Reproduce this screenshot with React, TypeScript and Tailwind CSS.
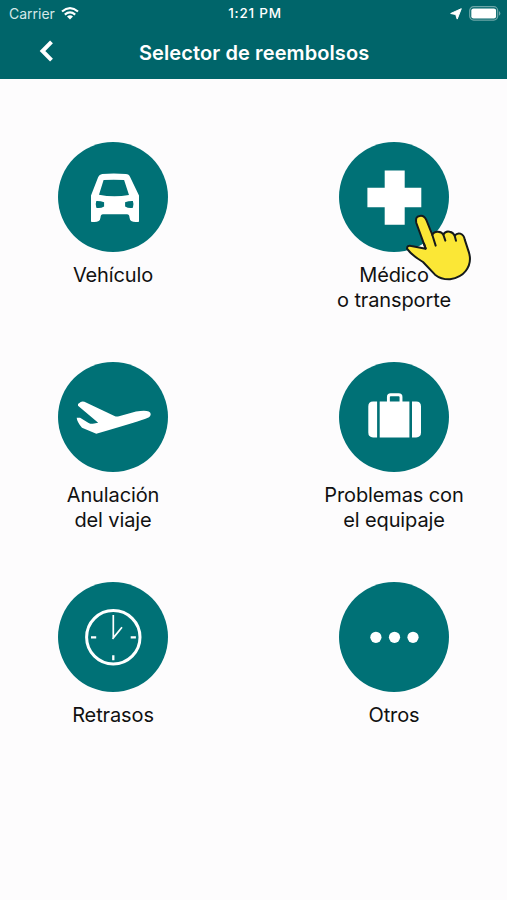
import type { ReactNode } from 'react';

function CarIcon() {
  return (
    <svg viewBox="0 -0.500 110 110" className="size-full" fill="white">
      <path
        fillRule="evenodd"
        d="M33 79.300V53l7.200-18.500q1-2.700 4-3Q55.500 30.700 67.800 31.500q3.300.2 4.300 3L81 53v26.300q-9 1.400-9.500-4.300-.2-3.200-2.500-3.200H45q-2.300 0-2.500 3.200-.5 5.700-9.500 4.300ZM45.600 37.600 41 52.300q14.800 2.900 30 .2l-4.900-14.900q-10.300-.7-20.500 0ZM38.300 58.400q-1.300 3.400 0 6.900 4 1 7.800-1.200v-4.400q-3.600-1.500-7.800-1.300Zm36.600 0q-4.200-.2-7.800 1.300v4.400q3.800 2.200 7.800 1.200 1.300-3.500 0-6.900Z"
      />
    </svg>
  );
}

function CrossIcon() {
  return (
    <svg viewBox="0 -0.500 110 110" className="size-full" fill="white">
      <path d="M45.700 28h20v17.300h16.600v19.500H65.700v17.500h-20V64.800H28.400V45.300h17.300Z" />
    </svg>
  );
}

function PlaneIcon() {
  return (
    <svg viewBox="0 -0.500 110 110" className="size-full" fill="white">
      <path d="m20 41.600 2.700-2.100q1.500-1 3.700-.2L56.500 53.500q2 .9 4.500.2L78 49q14-2.400 14.700 2.400.2 2.600-4 4.400Q84 58 38.300 71.300L24 65.200q-5-5.700-5.300-10h3.400l8.500 5.200q2 1.100 4.200.9l5.400-1L20 43.200Z" />
    </svg>
  );
}

function SuitcaseIcon() {
  return (
    <svg viewBox="0 -0.500 110 110" className="size-full" fill="white">
      <path d="M38.100 39.100v35.800h-4q-4.800 0-4.800-4.800V43.900q0-4.800 4.800-4.800ZM73 39.100h4.200q4.800 0 4.800 4.800v26.200q0 4.800-4.800 4.800H73ZM40.700 39.100h29.700v35.800H40.700Z" />
      <path d="M49.400 40v-5.400q0-2.300 2.300-2.300h8q2.300 0 2.300 2.300V40" fill="none" stroke="white" strokeWidth="2.900" />
    </svg>
  );
}

function ClockIcon() {
  return (
    <svg viewBox="0 -0.500 110 110" className="size-full" fill="none" stroke="white">
      <circle cx="55.300" cy="54.800" r="26.700" strokeWidth="3" />
      <path d="M55.300 32.500V56M54.500 56.400 64 44.800" strokeWidth="1.700" />
      <path d="M33 54.800h5.200M72.700 54.800h5.200M55.300 72.800v5" strokeWidth="2.300" />
    </svg>
  );
}

function DotsIcon() {
  return (
    <svg viewBox="0 -0.500 110 110" className="size-full" fill="white">
      <circle cx="36.900" cy="54.800" r="5.600" />
      <circle cx="55.500" cy="54.800" r="5.600" />
      <circle cx="74" cy="54.800" r="5.600" />
    </svg>
  );
}

function Pointer() {
  return (
    <svg viewBox="0 0 240 240" className="absolute left-[81px] top-[62.500px] size-20">
      <path
        d="M77 131 49 54Q45 34 59 33Q72 30 79 45L97 90Q101 79 114 80Q126 81 130 89Q136 77 149 80Q160 82 164 92Q171 83 181 86Q192 90 194 103L207 143Q216 174 197 198Q183 217 150 223Q124 224 105 209L69 171Q35 151 21 131Q21 120 34 123Z"
        fill="#fbe736"
        stroke="#151a1b"
        strokeWidth="6"
        strokeLinejoin="round"
      />
      <path d="M77 131 72 116M97 90 107 122M130 89 136 107M164 92 168 107" fill="none" stroke="#151a1b" strokeWidth="6" strokeLinecap="round" />
    </svg>
  );
}

interface OptionProps {
  icon: ReactNode;
  lines: string[];
  children?: ReactNode;
}

function Option({ icon, lines, children }: OptionProps) {
  return (
    <button className="relative flex h-[220px] w-[150px] flex-col items-center">
      <span className="block size-[110px] shrink-0 rounded-full bg-[#007176]">{icon}</span>
      <span className="mt-[11px] block whitespace-nowrap text-center text-[20px] leading-[24.500px] tracking-[-0.120px] text-[#111]">
        {lines.map((line) => (
          <span key={line} className="block">{line}</span>
        ))}
      </span>
      {children}
    </button>
  );
}

function Header() {
  return (
    <header className="h-[79px] bg-[#00656a] text-white">
      <div className="grid h-[27px] grid-cols-[1fr_auto_1fr] items-center pl-[9px] pr-[6px]">
        <div className="flex items-center gap-[6px] text-[#d5e8e8]">
          <span className="text-[14px]">Carrier</span>
          <svg viewBox="0 0 18 13" className="h-[13px] w-[18px]" fill="none" stroke="white" strokeWidth="2.200">
            <path d="M1 4.500Q9-2.100 17 4.500M3.800 7.600q5.200-4.300 10.400 0" />
            <path d="m9 12.500-3-3q3-2.400 6 0Z" fill="white" stroke="none" />
          </svg>
        </div>
        <span className="text-center text-[13.500px] font-medium tracking-[0.750px]">1:21 PM</span>
        <div className="flex items-center justify-end gap-[7px]">
          <svg viewBox="0 0 12 12" className="size-3" fill="white" stroke="white" strokeWidth="1" strokeLinejoin="round">
            <path d="M11.300.7 7.200 11.100 5.700 6.500.7 5.500Z" />
          </svg>
          <svg viewBox="0 0 32 15" className="h-[15px] w-8">
            <rect x=".7" y=".7" width="28" height="13.400" rx="4" fill="none" stroke="#6ca6a8" strokeWidth="1.200" />
            <rect x="2.300" y="2.400" width="24.800" height="10" rx="2.200" fill="white" />
            <path d="M30.200 5q2.200 2.400 0 4.800Z" fill="#8bbabb" />
          </svg>
        </div>
      </div>
      <div className="grid h-[50px] grid-cols-[139px_1fr_138px] items-center">
        <button className="pb-[2px] pl-[39px]">
          <svg viewBox="0 0 15 22" className="h-[22px] w-[15px]" fill="none" stroke="white" strokeWidth="4">
            <path d="M12.500 1.800 3.500 11l9 9.200" />
          </svg>
        </button>
        <h1 className="whitespace-nowrap pt-[2px] text-center text-[20px] font-semibold tracking-[0.100px]">Selector de reembolsos</h1>
      </div>
    </header>
  );
}

export default function App() {
  return (
    <div className="min-h-[900px] w-[507px] bg-[#fdfcfd] font-['Inter',sans-serif]">
      <Header />
      <main className="flex flex-col pt-[63.400px]">
        <div className="flex justify-between px-[38px]">
          <Option icon={<CarIcon />} lines={['Vehículo']} />
          <Option icon={<CrossIcon />} lines={['Médico', 'o transporte']}>
            <Pointer />
          </Option>
        </div>
        <div className="flex justify-between px-[38px]">
          <Option icon={<PlaneIcon />} lines={['Anulación', 'del viaje']} />
          <Option icon={<SuitcaseIcon />} lines={['Problemas con', 'el equipaje']} />
        </div>
        <div className="flex justify-between px-[38px]">
          <Option icon={<ClockIcon />} lines={['Retrasos']} />
          <Option icon={<DotsIcon />} lines={['Otros']} />
        </div>
      </main>
    </div>
  );
}
